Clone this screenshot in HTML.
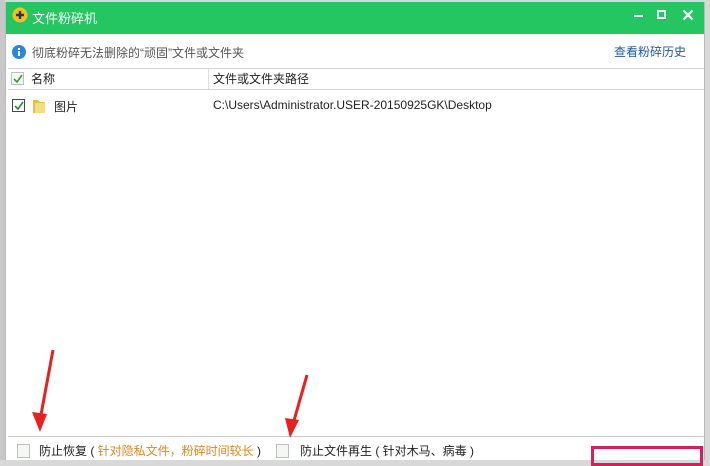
<!DOCTYPE html>
<html><head><meta charset="utf-8"><style>
*{margin:0;padding:0;box-sizing:border-box}
body{width:710px;height:460px;overflow:hidden;background:#d8d8d8;font-family:"Liberation Sans","Noto Sans CJK SC",sans-serif;font-size:12px;color:#222;position:relative}
.win{position:absolute;left:5px;top:2px;width:700px;height:458px;background:#fff;border-left:1px solid #bbb;border-right:1px solid #bbb}
.title{position:absolute;left:0;top:0;width:100%;height:32px;background:#24c662;color:#fff;font-size:13px}
.abs{position:absolute}
.cb{position:absolute;width:13px;height:13px;border:1px solid #8a9aa8;background:#fff}
.cb.g{border-color:#b8c4b8;background:#f6f6f6}
</style></head><body>
<div class="abs" style="left:0;top:0;width:5px;height:460px;background:#c8c8c8"></div>
<div class="win">
 <div class="title">
  <svg class="abs" style="left:6px;top:5px" width="16" height="16"><circle cx="8" cy="8" r="7.5" fill="#f2c01e"/><path d="M8 4v8M4 8h8" stroke="#333" stroke-width="2.4"/></svg>
  <div class="abs" style="left:26px;top:6px">文件粉碎机</div>
  <div class="abs" style="left:628px;top:13px;width:9px;height:2px;background:#fff"></div>
  <div class="abs" style="left:651px;top:8px;width:9px;height:9px;border:2px solid #fff"></div>
  <svg class="abs" style="left:676px;top:7px" width="12" height="12"><path d="M1.5 1.5l9 9M10.5 1.5l-9 9" stroke="#fff" stroke-width="2.2"/></svg>
 </div>
 <svg class="abs" style="left:6px;top:43px" width="14" height="14"><circle cx="7" cy="7" r="7" fill="#2a86d8"/><rect x="6" y="6" width="2" height="5" fill="#fff"/><rect x="6" y="3" width="2" height="2" fill="#fff"/></svg>
 <div class="abs" style="left:26px;top:42px;color:#555">彻底粉碎无法删除的“顽固”文件或文件夹</div>
 <div class="abs" style="left:608px;top:41px;color:#1e5aa0">查看粉碎历史</div>
 <div class="abs" style="left:2px;top:66px;width:696px;height:22px;border-top:1px solid #d4d4d4;border-bottom:1px solid #d4d4d4;background:#fff"></div>
 <div class="abs" style="left:202px;top:67px;width:1px;height:20px;background:#ddd"></div>
 <div class="cb g" style="left:5px;top:70px"></div>
 <svg class="abs" style="left:6px;top:71px" width="12" height="12"><path d="M2 6l3 3 5-7" stroke="#3a9a3a" stroke-width="1.6" fill="none"/></svg>
 <div class="abs" style="left:25px;top:68px">名称</div>
 <div class="abs" style="left:207px;top:68px">文件或文件夹路径</div>
 <div class="cb" style="left:6px;top:97px;border-color:#445"></div>
 <svg class="abs" style="left:7px;top:98px" width="12" height="12"><path d="M2 6l3 3 5-7" stroke="#2a8a2a" stroke-width="1.6" fill="none"/></svg>
 <svg class="abs" style="left:26px;top:96px" width="14" height="16"><path d="M1 2h5l2 2h5v11H1z" fill="#e2c04a"/><path d="M3 5h10v10H3z" fill="#f4dc80"/></svg>
 <div class="abs" style="left:48px;top:96px">图片</div>
 <div class="abs" style="left:207px;top:96px">C:\Users\Administrator.USER-20150925GK\Desktop</div>
 <div class="abs" style="left:2px;top:434px;width:696px;height:1px;background:#ccc"></div>
 <div class="cb g" style="left:11px;top:442px;width:13px;height:14px"></div>
 <div class="abs" style="left:33px;top:440px">防止恢复 ( <span style="color:#e0861e">针对隐私文件，粉碎时间较长</span> )</div>
 <div class="cb g" style="left:270px;top:442px;width:13px;height:14px"></div>
 <div class="abs" style="left:294px;top:440px">防止文件再生 ( 针对木马、病毒 )</div>
 <div class="abs" style="left:585px;top:444px;width:112px;height:20px;border:3px solid #d81e5a"></div>
</div>
<svg class="abs" style="left:0;top:0" width="710" height="460">
 <path d="M53 350L40 420" stroke="#e82020" stroke-width="3"/><path d="M32 412L40 432L47 414z" fill="#e82020"/>
 <path d="M307 375L293 424" stroke="#e82020" stroke-width="3"/><path d="M285 418L290 438L299 420z" fill="#e82020"/>
</svg>
</body></html>
